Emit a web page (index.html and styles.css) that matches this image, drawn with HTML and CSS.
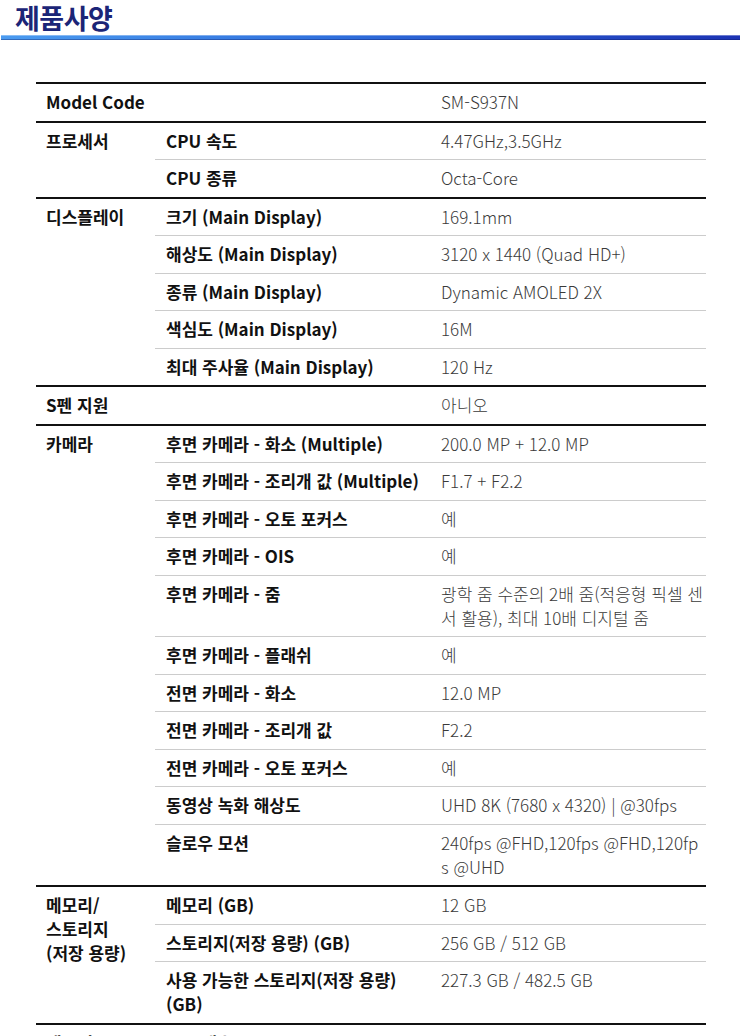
FILE: index.html
```html
<!DOCTYPE html>
<html lang="ko">
<head>
<meta charset="utf-8">
<title>제품사양</title>
<link rel="stylesheet" href="styles.css">
</head>
<body>
<header class="page-head">
  <h1 class="title">제품사양</h1>
  <div class="title-bar"></div>
</header>

<main class="spec">
  <section class="group">
    <div class="g-label">Model Code</div>
    <div class="rows">
      <div class="row"><div class="key"></div><div class="val">SM-S937N</div></div>
    </div>
  </section>

  <section class="group">
    <div class="g-label">프로세서</div>
    <div class="rows">
      <div class="row"><div class="key">CPU 속도</div><div class="val">4.47GHz,3.5GHz</div></div>
      <div class="row"><div class="key">CPU 종류</div><div class="val">Octa-Core</div></div>
    </div>
  </section>

  <section class="group">
    <div class="g-label">디스플레이</div>
    <div class="rows">
      <div class="row"><div class="key">크기 (Main Display)</div><div class="val">169.1mm</div></div>
      <div class="row"><div class="key">해상도 (Main Display)</div><div class="val">3120 x 1440 (Quad HD+)</div></div>
      <div class="row"><div class="key">종류 (Main Display)</div><div class="val">Dynamic AMOLED 2X</div></div>
      <div class="row"><div class="key">색심도 (Main Display)</div><div class="val">16M</div></div>
      <div class="row"><div class="key">최대 주사율 (Main Display)</div><div class="val">120 Hz</div></div>
    </div>
  </section>

  <section class="group">
    <div class="g-label">S펜 지원</div>
    <div class="rows">
      <div class="row"><div class="key"></div><div class="val">아니오</div></div>
    </div>
  </section>

  <section class="group">
    <div class="g-label">카메라</div>
    <div class="rows">
      <div class="row"><div class="key">후면 카메라 - 화소 (Multiple)</div><div class="val">200.0 MP + 12.0 MP</div></div>
      <div class="row"><div class="key">후면 카메라 - 조리개 값 (Multiple)</div><div class="val">F1.7 + F2.2</div></div>
      <div class="row"><div class="key">후면 카메라 - 오토 포커스</div><div class="val">예</div></div>
      <div class="row"><div class="key">후면 카메라 - OIS</div><div class="val">예</div></div>
      <div class="row"><div class="key">후면 카메라 - 줌</div><div class="val">광학 줌 수준의 2배 줌(적응형 픽셀 센서 활용), 최대 10배 디지털 줌</div></div>
      <div class="row"><div class="key">후면 카메라 - 플래쉬</div><div class="val">예</div></div>
      <div class="row"><div class="key">전면 카메라 - 화소</div><div class="val">12.0 MP</div></div>
      <div class="row"><div class="key">전면 카메라 - 조리개 값</div><div class="val">F2.2</div></div>
      <div class="row"><div class="key">전면 카메라 - 오토 포커스</div><div class="val">예</div></div>
      <div class="row"><div class="key">동영상 녹화 해상도</div><div class="val">UHD 8K (7680 x 4320) | @30fps</div></div>
      <div class="row"><div class="key">슬로우 모션</div><div class="val">240fps @FHD,120fps @FHD,120fps @UHD</div></div>
    </div>
  </section>

  <section class="group">
    <div class="g-label">메모리/<br>스토리지<br>(저장 용량)</div>
    <div class="rows">
      <div class="row"><div class="key">메모리 (GB)</div><div class="val">12 GB</div></div>
      <div class="row"><div class="key">스토리지(저장 용량) (GB)</div><div class="val">256 GB / 512 GB</div></div>
      <div class="row"><div class="key">사용 가능한 스토리지(저장 용량) (GB)</div><div class="val">227.3 GB / 482.5 GB</div></div>
    </div>
  </section>

  <section class="group">
    <div class="g-label">네트워크</div>
    <div class="rows">
      <div class="row"><div class="key">SIM 개수</div><div class="val">Dual-SIM</div></div>
      <div class="row"><div class="key">SIM 크기</div><div class="val">Nano-SIM (4FF), Embedded-SIM</div></div>
    </div>
  </section>
</main>
</body>
</html>
```

FILE: styles.css
```css
html, body {
  margin: 0;
  padding: 0;
  background: #ffffff;
}

body {
  font-family: "Noto Sans CJK KR", "Noto Sans", sans-serif;
  color: #111111;
}

.title {
  margin: 0;
  padding-left: 15px;
  font-size: 27px;
  line-height: 35px;
  font-weight: 700;
  color: #1b2577;
  letter-spacing: -0.5px;
}

.title-bar {
  margin: 0 10px 0 1px;
  height: 5px;
  background: linear-gradient(to right, #4b9bf0 0%, #2f6fdc 45%, #1c33b4 100%);
  box-shadow: inset 0 1px 0 rgba(255, 255, 255, 0.35), inset 0 -1px 0 rgba(10, 20, 90, 0.35);
}

.spec {
  margin: 42px 0 0 36px;
  width: 670px;
  border-top: 2px solid #111111;
}

.group {
  display: grid;
  grid-template-columns: 119px 1fr;
  border-bottom: 2px solid #111111;
}

.g-label {
  padding: 6px 4px 6px 10px;
  font-size: 17px;
  line-height: 24px;
  font-weight: 700;
  color: #111111;
}

.row {
  display: grid;
  grid-template-columns: 275px 1fr;
}

.row + .row {
  border-top: 1px solid #cccccc;
}

.key,
.val {
  padding: 6px 4px 6.5px 11px;
  font-size: 17px;
  line-height: 24px;
}

.key {
  font-weight: 700;
  color: #111111;
}

.val {
  padding-right: 0;
  font-weight: 300;
  color: #3a3a3a;
  word-break: break-all;
}
```
